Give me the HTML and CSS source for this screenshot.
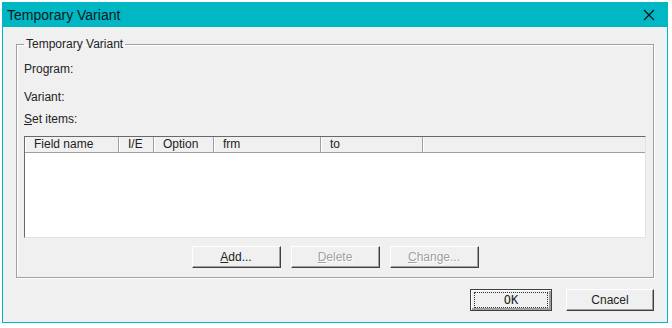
FILE: index.html
```html
<!DOCTYPE html>
<html lang="en">
<head>
    <meta charset="UTF-8">
    <title>Temporary Variant</title>
    <link rel="stylesheet" href="styles.css">
</head>
<body>
    <div class="window">
        <div class="titlebar">
            <span class="title">Temporary Variant</span>
            <svg class="close" width="12" height="12" viewBox="0 0 12 12">
                <path d="M1 1 L11 11 M11 1 L1 11" stroke="#111" stroke-width="1.2" fill="none"/>
            </svg>
        </div>
        <div class="content">
            <fieldset class="group">
                <legend>Temporary Variant</legend>
                <div class="label program">Program:</div>
                <div class="label variant">Variant:</div>
                <div class="label items"><u>S</u>et items:</div>
                <div class="list">
                    <div class="list-head">
                        <div class="col c1">Field name</div>
                        <div class="col c2">I/E</div>
                        <div class="col c3">Option</div>
                        <div class="col c4">frm</div>
                        <div class="col c5">to</div>
                        <div class="col rest"></div>
                    </div>
                    <div class="list-body"></div>
                </div>
                <div class="actions">
                    <button class="btn"><u>A</u>dd...</button>
                    <button class="btn off"><u>D</u>elete</button>
                    <button class="btn off"><u>C</u>hange...</button>
                </div>
            </fieldset>
            <div class="footer">
                <button class="btn ok"><span>OK</span></button>
                <button class="btn cancel">Cnacel</button>
            </div>
        </div>
    </div>
</body>
</html>
```

FILE: styles.css
```css
body {
    margin: 0;
    background: #fff;
    font-family: "Liberation Sans", Arial, sans-serif;
    font-size: 12px;
    color: #000;
}
.window {
    margin: 2px 4px 0 2px;
    height: 320px;
    border: 1px solid #00b7c3;
    border-top: none;
    background: #f0f0f0;
    display: flex;
    flex-direction: column;
}
.titlebar {
    height: 25px;
    background: #00b7c3;
    display: flex;
    align-items: center;
    justify-content: space-between;
    padding: 0 12px 0 4px;
}
.title {
    font-size: 14px;
    color: #0a1a1c;
}
.content {
    flex: 1;
    padding: 10px 13px 0 13px;
}
.group {
    margin: 0;
    padding: 3px 7px 9px 7px;
    border: 1px solid #a0a0a0;
    box-shadow: 1px 1px 0 #fff, inset 1px 1px 0 #fff;
}
.group legend {
    padding: 0 2px;
    margin-left: 0;
    color: #222;
}
.label {
    height: 14px;
    line-height: 14px;
    color: #222;
}
.program {
    margin-top: 8px;
}
.variant {
    margin-top: 14px;
}
.items {
    margin-top: 8px;
    margin-bottom: 10px;
}
.list {
    height: 102px;
    box-sizing: border-box;
    border: 1px solid #a0a0a0;
    border-top-color: #696969;
    border-left-color: #696969;
    border-right-color: #e3e3e3;
    border-bottom-color: #e3e3e3;
    background: #fff;
    display: flex;
    flex-direction: column;
}
.list-head {
    height: 15px;
    display: flex;
    background: #f0f0f0;
    border-bottom: 1px solid #a0a0a0;
}
.col {
    border-right: 1px solid #a0a0a0;
    border-left: 1px solid #fff;
    padding-left: 8px;
    line-height: 15px;
    color: #222;
}
.c1 { width: 84px; }
.c2 { width: 25px; }
.c3 { width: 50px; }
.c4 { width: 97px; }
.c5 { width: 92px; }
.rest { flex: 1; border-right: none; }
.list-body {
    flex: 1;
}
.actions {
    display: flex;
    justify-content: center;
    gap: 10px;
    margin-top: 8px;
}
.btn {
    width: 89px;
    height: 22px;
    font-family: "Liberation Sans", Arial, sans-serif;
    font-size: 12px;
    color: #222;
    background: #f0f0f0;
    border: 1px solid;
    border-color: #fff #404040 #404040 #fff;
    box-shadow: inset -1px -1px 0 #a0a0a0;
    padding: 0;
}
.btn.off {
    color: #a0a0a0;
    text-shadow: 1px 1px 0 #fff;
}
.footer {
    display: flex;
    justify-content: flex-end;
    gap: 14px;
    margin-top: 11px;
}
.ok {
    width: 82px;
    border-color: #404040;
    box-shadow: inset 1px 1px 0 #fff, inset -2px -2px 0 #a0a0a0;
    font-family: "DejaVu Sans Mono", monospace;
    font-size: 12px;
}
.ok span {
    display: block;
    margin: 2px 3px;
    border: 1px dotted #333;
    line-height: 14px;
}
.cancel {
    width: 88px;
}
```
